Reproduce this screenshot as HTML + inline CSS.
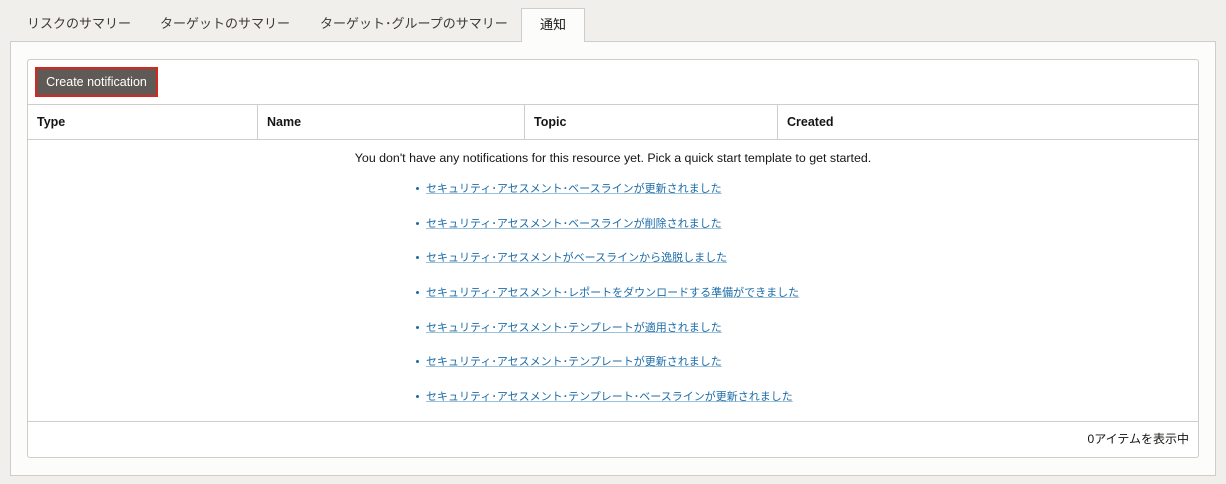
<!DOCTYPE html>
<html><head><meta charset="utf-8"><style>
*{margin:0;padding:0;box-sizing:border-box}
body{width:1226px;height:484px;background:#f1efec;font-family:"Liberation Sans","Noto Sans CJK JP",sans-serif;position:relative;overflow:hidden;color:#161513}
.tab{position:absolute;top:9px;height:34px;line-height:30px;font-size:13px;color:#3d3a37}
.panel{position:absolute;left:10px;top:41px;width:1206px;height:435px;background:#fcfcfb;border:1px solid #cfccc9}
.active{position:absolute;left:521px;top:8px;width:64px;height:34px;background:#fcfcfb;border:1px solid #cfccc9;border-bottom:none;text-align:center;line-height:32px;font-size:13px;z-index:2}
.card{position:absolute;left:27px;top:59px;width:1172px;height:399px;border:1px solid #cfccc9;border-radius:3px;background:#fff}
.btn{position:absolute;left:7px;top:7px;width:123px;height:30px;background:#5f5a55;border:2px solid #d8261f;color:#fff;font-size:12.5px;text-align:center;line-height:26px}
.hdr{position:absolute;left:0;top:44px;width:1170px;height:36px;border-top:1px solid #cfccc9;border-bottom:1px solid #cfccc9;font-size:12.5px;font-weight:bold}
.hdr div{position:absolute;top:0;height:34px;line-height:34px;padding-left:9px}
.msg{position:absolute;top:91px;left:0;width:1170px;text-align:center;font-size:12.4px}
.lnk{position:absolute;left:398px;font-size:11px;color:#1c6ca8;text-decoration:underline;text-decoration-color:#9cc1da}
.lnk:before{content:"";background:#1c6ca8;width:3px;height:3px;border-radius:50%;position:absolute;left:-10px;top:7px}
.foot{position:absolute;left:0;top:361px;width:1170px;border-top:1px solid #cfccc9;height:36px;text-align:right;padding-right:9px;line-height:35px;font-size:12px}
</style></head><body>
<div class="tab" style="left:27px">リスクのサマリー</div>
<div class="tab" style="left:160px">ターゲットのサマリー</div>
<div class="tab" style="left:320px">ターゲット･グループのサマリー</div>
<div class="panel"></div>
<div class="active">通知</div>
<div class="card">
<div class="btn">Create notification</div>
<div class="hdr">
<div style="left:0">Type</div>
<div style="left:229px;border-left:1px solid #cfccc9">Name</div>
<div style="left:496px;border-left:1px solid #cfccc9">Topic</div>
<div style="left:749px;border-left:1px solid #cfccc9">Created</div>
</div>
<div class="msg">You don't have any notifications for this resource yet. Pick a quick start template to get started.</div>
<div class="lnk" style="top:120px">セキュリティ･アセスメント･ベースラインが更新されました</div>
<div class="lnk" style="top:155px">セキュリティ･アセスメント･ベースラインが削除されました</div>
<div class="lnk" style="top:189px">セキュリティ･アセスメントがベースラインから逸脱しました</div>
<div class="lnk" style="top:224px">セキュリティ･アセスメント･レポートをダウンロードする準備ができました</div>
<div class="lnk" style="top:259px">セキュリティ･アセスメント･テンプレートが適用されました</div>
<div class="lnk" style="top:293px">セキュリティ･アセスメント･テンプレートが更新されました</div>
<div class="lnk" style="top:328px">セキュリティ･アセスメント･テンプレート･ベースラインが更新されました</div>
<div class="foot">0アイテムを表示中</div>
</div>
</body></html>
